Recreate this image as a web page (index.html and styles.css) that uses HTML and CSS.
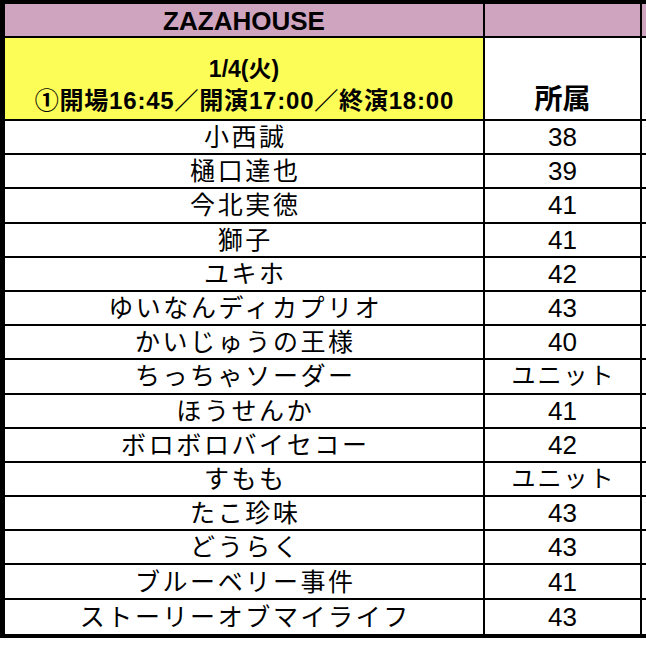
FILE: index.html
```html
<!DOCTYPE html>
<html lang="ja">
<head>
<meta charset="utf-8">
<title>ZAZAHOUSE</title>
<link rel="stylesheet" href="styles.css">
</head>
<body>
<div class="frame">
<table class="sheet">
  <colgroup>
    <col class="c-name">
    <col class="c-team">
    <col class="c-extra">
  </colgroup>
  <thead>
    <tr class="venue">
      <th class="venue-name">ZAZAHOUSE</th>
      <th class="venue-blank"></th>
      <th class="venue-blank last"></th>
    </tr>
    <tr class="show">
      <th class="show-time"><span class="l1">1/4(火)</span><span class="l2">①開場16:45／開演17:00／終演18:00</span></th>
      <th class="show-team">所属</th>
      <th class="show-blank last"></th>
    </tr>
  </thead>
  <tbody>
    <tr><td class="name">小西誠</td><td class="team">38</td><td class="last"></td></tr>
    <tr><td class="name">樋口達也</td><td class="team">39</td><td class="last"></td></tr>
    <tr><td class="name">今北実徳</td><td class="team">41</td><td class="last"></td></tr>
    <tr><td class="name">獅子</td><td class="team">41</td><td class="last"></td></tr>
    <tr><td class="name">ユキホ</td><td class="team">42</td><td class="last"></td></tr>
    <tr><td class="name">ゆいなんディカプリオ</td><td class="team">43</td><td class="last"></td></tr>
    <tr><td class="name">かいじゅうの王様</td><td class="team">40</td><td class="last"></td></tr>
    <tr><td class="name">ちっちゃソーダー</td><td class="team unit">ユニット</td><td class="last"></td></tr>
    <tr><td class="name">ほうせんか</td><td class="team">41</td><td class="last"></td></tr>
    <tr><td class="name">ボロボロバイセコー</td><td class="team">42</td><td class="last"></td></tr>
    <tr><td class="name">すもも</td><td class="team unit">ユニット</td><td class="last"></td></tr>
    <tr><td class="name">たこ珍味</td><td class="team">43</td><td class="last"></td></tr>
    <tr><td class="name">どうらく</td><td class="team">43</td><td class="last"></td></tr>
    <tr><td class="name">ブルーベリー事件</td><td class="team">41</td><td class="last"></td></tr>
    <tr><td class="name">ストーリーオブマイライフ</td><td class="team">43</td><td class="last"></td></tr>
  </tbody>
</table>
</div>
</body>
</html>
```
FILE: styles.css
```css
html, body {
  margin: 0;
  padding: 0;
  background: #ffffff;
}
body {
  font-family: "Liberation Sans", "Noto Sans CJK JP", sans-serif;
  color: #000;
}
.frame {
  width: 646px;
  height: 648px;
  overflow: hidden;
}
.sheet {
  border-collapse: separate;
  border-spacing: 0;
  table-layout: fixed;
  width: 742px;
  border-top: 4px solid #000;
  border-left: 5px solid #000;
  border-bottom: 4px solid #000;
}
.c-name { width: 480px; }
.c-team { width: 157px; }
.c-extra { width: 100px; }

.sheet th, .sheet td {
  padding: 0;
  border-right: 2px solid #000;
  border-bottom: 2px solid #000;
  text-align: center;
  box-sizing: border-box;
}
.sheet tbody tr:last-child td { border-bottom: 0; }

.venue th {
  height: 32px;
  background: #cfa4bf;
  font-size: 26px;
  font-weight: bold;
  line-height: 30px;
  vertical-align: middle;
  padding-top: 2px;
}

.show th {
  height: 83px;
  vertical-align: bottom;
  font-weight: bold;
}
.show-time {
  background: #fdfd58;
  font-size: 23px;
  line-height: 31px;
  padding-bottom: 3px !important;
}
.show-time .l1, .show-time .l2 {
  display: block;
}
.show-time .l2 {
  font-size: 24px;
  letter-spacing: 0.8px;
  padding-left: 0.8px;
}
.show-team {
  font-size: 28px;
  line-height: 34px;
  padding-bottom: 2px !important;
  background: #fff;
}
.show-blank { background: #fff; }

.sheet tbody td {
  height: 34.2px;
  vertical-align: middle;
  line-height: 30px;
}
.name {
  font-size: 25px;
  letter-spacing: 2.6px;
  padding-left: 2.6px !important;
}
.team {
  font-size: 26px;
}
.team.unit {
  font-size: 24px;
  letter-spacing: 2px;
  padding-left: 2px !important;
}
```
